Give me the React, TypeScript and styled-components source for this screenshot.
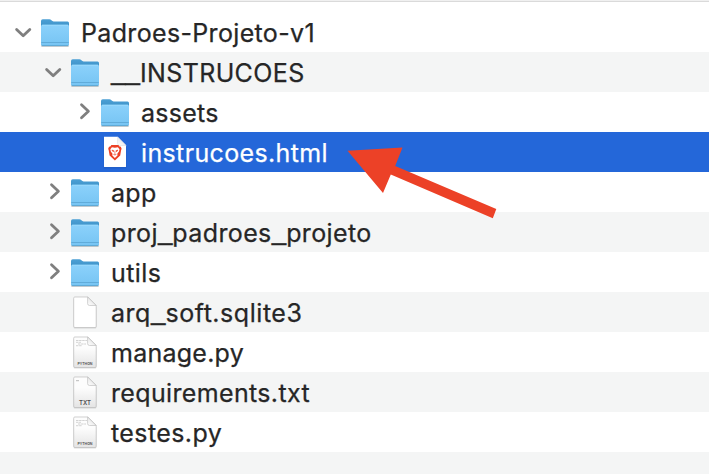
import React from 'react';
import styled, { createGlobalStyle } from 'styled-components';

type Kind = 'folder' | 'brave' | 'blank' | 'python' | 'text';

interface Entry {
  name: string;
  depth: number;
  kind: Kind;
  state?: 'open' | 'closed';
  selected?: boolean;
  tracking: number;
}

const entries: Entry[] = [
  { name: 'Padroes-Projeto-v1', depth: 0, kind: 'folder', state: 'open', tracking: 0.34 },
  { name: '__INSTRUCOES', depth: 1, kind: 'folder', state: 'open', tracking: 0.38 },
  { name: 'assets', depth: 2, kind: 'folder', state: 'closed', tracking: 0.25 },
  { name: 'instrucoes.html', depth: 2, kind: 'brave', selected: true, tracking: 0.36 },
  { name: 'app', depth: 1, kind: 'folder', state: 'closed', tracking: 0.3 },
  { name: 'proj_padroes_projeto', depth: 1, kind: 'folder', state: 'closed', tracking: 0.38 },
  { name: 'utils', depth: 1, kind: 'folder', state: 'closed', tracking: 0.45 },
  { name: 'arq_soft.sqlite3', depth: 1, kind: 'blank', tracking: 0.54 },
  { name: 'manage.py', depth: 1, kind: 'python', tracking: 0.25 },
  { name: 'requirements.txt', depth: 1, kind: 'text', tracking: 0.35 },
  { name: 'testes.py', depth: 1, kind: 'python', tracking: 0.4 },
];

const GlobalStyle = createGlobalStyle`
  * { box-sizing: border-box; }
  body { margin: 0; background: #fff; overflow: hidden; }
`;

const Window = styled.main`
  position: relative;
  display: flex;
  flex-direction: column;
  width: 709px;
  height: 474px;
  overflow: hidden;
  background: #fff;
  font-family: Inter, 'Liberation Sans', sans-serif;
`;

const HeaderEdge = styled.div`
  flex: none;
  height: 2px;
  margin-bottom: 10px;
  background: #f0f0f0;
  border-bottom: 1px solid #dadada;
`;

const List = styled.ul`
  margin: 0;
  padding: 0;
  list-style: none;
`;

const Row = styled.li<{ $depth: number; $selected?: boolean }>`
  display: flex;
  align-items: center;
  height: 40px;
  padding-left: ${(p) => 10 + p.$depth * 30}px;
  color: ${(p) => (p.$selected ? '#fff' : '#262626')};
  background: ${(p) => (p.$selected ? '#2467d9' : 'transparent')};
  &:nth-child(even) {
    background: ${(p) => (p.$selected ? '#2467d9' : '#f4f5f5')};
  }
`;

const Disclosure = styled.span`
  flex: none;
  width: 30px;
  height: 40px;
`;

const IconSlot = styled.span`
  flex: none;
  width: 30px;
  height: 40px;
  margin-right: 11px;
`;

const Drawing = styled.svg`
  display: block;
  overflow: visible;
`;

const Name = styled.span<{ $tracking: number }>`
  height: 40px;
  padding-top: 1px;
  font-size: 25px;
  line-height: 40px;
  white-space: nowrap;
  letter-spacing: ${(p) => p.$tracking}px;
  -webkit-text-stroke: 0.25px currentColor;
`;

/* A wide underscore that joins its neighbour without a gap. */
const Underscore = styled.span`
  font-family: 'Liberation Sans', sans-serif;
  font-size: 26px;
  line-height: 0;
  letter-spacing: 0;
  vertical-align: 2px;
`;

const Filler = styled.div`
  flex: 1;
  background: #f4f5f5;
`;

const Arrow = styled.svg`
  position: absolute;
  left: 340px;
  top: 140px;
`;

const Chevron = ({ state }: { state: 'open' | 'closed' }) => (
  <Drawing width="30" height="40" fill="none" stroke="#7f7f7f" strokeWidth="2.8" strokeLinecap="round" strokeLinejoin="round">
    <path d={state === 'open' ? 'M6.6 17.4 13.2 23.8 19.8 17.4' : 'M11.5 12.8 18.4 19.3 11.5 25.8'} />
  </Drawing>
);

const Folder = () => (
  <Drawing width="30" height="40">
    <defs>
      <linearGradient id="folderFront" x1="0" y1="0" x2="0" y2="1">
        <stop offset="0" stopColor="#8bd1fb" />
        <stop offset="1" stopColor="#76c4f3" />
      </linearGradient>
      <linearGradient id="folderBack" x1="0" y1="0" x2="0" y2="1">
        <stop offset="0" stopColor="#4ca0d5" />
        <stop offset="1" stopColor="#3587be" />
      </linearGradient>
    </defs>
    <path d="M1 33.2h28v.5q0 1.2-1.2 1.2H2.2Q1 34.9 1 33.7Z" fill="#8a9299" opacity=".45" />
    <path d="M1 9q0-1.7 1.7-1.7h6.6c1.8 0 2.5 2.2 4.3 2.2h14q1.4 0 1.4 1.5v9H1Z" fill="url(#folderBack)" />
    <path d="M1 14.2q0-1.5 1.5-1.5h25q1.5 0 1.5 1.5v18.1q0 1.7-1.7 1.7H2.7Q1 34 1 32.3Z" fill="url(#folderFront)" />
    <path d="M2 13.2h26" stroke="#a5defd" strokeWidth=".7" />
    <path d="M1.3 30.5h27.4" stroke="#559fce" strokeWidth=".7" />
    <path d="M1.8 33.6h26.4" stroke="#579fcc" strokeWidth=".8" />
  </Drawing>
);

const Page = ({ kind }: { kind: Kind }) => {
  const label = kind === 'python' ? 'PYTHON' : kind === 'text' ? 'TXT' : '';
  const brave = kind === 'brave';
  return (
    <Drawing width="30" height="40">
      <defs>
        <linearGradient id="paper" x1="0" y1="0" x2="0" y2="1">
          <stop offset=".35" stopColor="#fdfdfd" />
          <stop offset="1" stopColor="#e4e4e4" />
        </linearGradient>
        <linearGradient id="fold" x1="0" y1="1" x2="1" y2="0">
          <stop offset="0" stopColor="#fff" />
          <stop offset="1" stopColor="#dadada" />
        </linearGradient>
      </defs>
      <path
        d="M3.8 6h14.4l8.2 8.5v20.3q0 1.2-1.2 1.2H4.8q-1.2 0-1.2-1.2V7.2Q3.6 6 4.8 6Z"
        transform="translate(0 .5)"
        fill={brave ? '#1a4da8' : '#8a8a8a'}
        opacity=".3"
      />
      <path
        d={
          brave
            ? 'M4 4.8h13.5l8.5 8.7v21q0 .5-.5.5h-21q-.5 0-.5-.5Z'
            : 'M4.7 5h13.2l8.3 8.3v21q0 1.2-1.2 1.2H4.9q-1.2 0-1.2-1.2v-28q0-1.3 1-1.3Z'
        }
        fill={label ? 'url(#paper)' : '#fff'}
        stroke={brave ? 'none' : '#bcbcbc'}
        strokeWidth=".7"
      />
      <path
        d="M17.6 5v6.5q0 2 2 2h6.6Z"
        fill="url(#fold)"
        stroke={brave ? '#dcdfe5' : '#bdbdbd'}
        strokeWidth=".65"
      />
      {kind === 'python' && (
        <path d="M6 8.5h11M6 10.3h5M8 12h8M6 13.7h6" stroke="#b7b7b7" strokeWidth=".6" strokeDasharray="2.5 .6" />
      )}
      {kind === 'text' && <path d="M6 8.7h3" stroke="#aaa" strokeWidth=".8" />}
      {label && (
        <text
          x="15"
          y={kind === 'text' ? 32.8 : 32.5}
          fontSize={kind === 'text' ? 5.7 : 3.8}
          fontWeight="600"
          fill="#4c4c4c"
          textAnchor="middle"
          textLength={kind === 'text' ? 12 : 15}
          lengthAdjust="spacingAndGlyphs"
        >
          {label}
        </text>
      )}
      {brave && (
        <g transform="translate(7.9 13)">
          <path d="M3.5 0h7l1.1 1.4 1.3.3.8 2-.5 1.5-.9 5.2L7 15.4l-5.3-5L.8 5.2.3 3.7l.8-2 1.3-.3Z" fill="#ed4024" />
          <path d="m4 2.2 3 .6 3-.6 1.6 2.1-.5 2.2-1.7 2.3.2 1.7L7 12.9l-2.6-2.4.2-1.7-1.7-2.3-.5-2.2Z" fill="#fff" />
          <path d="m4 5 2 .8-.7 1Zm6 0-2 .8.7 1ZM7 6v3M5.5 9.4 7 10l1.5-.6" fill="#ed4024" stroke="#ed4024" strokeWidth=".6" />
        </g>
      )}
    </Drawing>
  );
};

const Label = ({ text }: { text: string }) => (
  <>
    {text.split(/(_+)/).map((part, i) =>
      part.startsWith('_') ? <Underscore key={i}>{part}</Underscore> : part
    )}
  </>
);

export default function App() {
  return (
    <Window>
      <GlobalStyle />
      <HeaderEdge />
      <List>
        {entries.map((e) => (
          <Row key={e.name} $depth={e.depth} $selected={e.selected}>
            <Disclosure>{e.state && <Chevron state={e.state} />}</Disclosure>
            <IconSlot>{e.kind === 'folder' ? <Folder /> : <Page kind={e.kind} />}</IconSlot>
            <Name $tracking={e.tracking}>
              <Label text={e.name} />
            </Name>
          </Row>
        ))}
      </List>
      <Filler />
      <Arrow width="170" height="90">
        <path d="M7.5 10.8 62.5 7.5 55.2 26 156.3 69 152.8 78.3 50.8 34.6 43 53Z" fill="#ec4127" />
      </Arrow>
    </Window>
  );
}
